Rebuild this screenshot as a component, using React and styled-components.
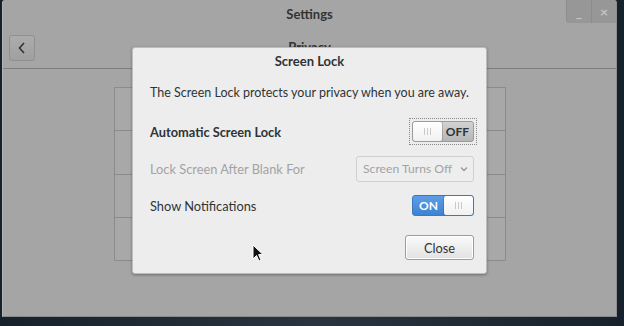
import styled, { createGlobalStyle } from "styled-components";

const GlobalStyle = createGlobalStyle`
  html, body {
    margin: 0;
    padding: 0;
  }
  body {
    background: #1b2530;
    font-family: Lato, "Open Sans", sans-serif;
    font-size: 13px;
    color: #2e3436;
  }
`;

const rows = [
  { label: "Automatic Screen Lock", kind: "switch", on: false, strong: true, focused: true },
  { label: "Lock Screen After Blank For", kind: "combo", value: "Screen Turns Off", disabled: true },
  { label: "Show Notifications", kind: "switch", on: true },
];

const Grip = () => (
  <svg width="9" height="7" viewBox="0 0 9 7">
    <path d="M1.5 0v7M4.5 0v7M7.5 0v7" stroke="#c9c9c9" strokeWidth="1" />
  </svg>
);

const Switch = ({ on, focused }) => (
  <SwitchFocus $focused={focused}>
    <SwitchTrack $on={on}>
      {on && <SwitchLabel $on>ON</SwitchLabel>}
      <SwitchKnob>
        <Grip />
      </SwitchKnob>
      {!on && <SwitchLabel>OFF</SwitchLabel>}
    </SwitchTrack>
  </SwitchFocus>
);

const Cursor = () => (
  <CursorSvg width="12" height="18" viewBox="0 0 12 18">
    <path
      d="M1 1 L1 15 L4.5 11.5 L7 17 L9 16 L6.6 10.6 L11 10.6 Z"
      fill="#111"
      stroke="#fff"
      strokeWidth="1"
      strokeLinejoin="round"
    />
  </CursorSvg>
);

const App = () => {
  return (
    <>
      <GlobalStyle />
      <Desktop>
        <Window>
          <TitleBar>
            <WindowTitle>Settings</WindowTitle>
            <WindowControls>
              <WindowButton>_</WindowButton>
              <WindowButton>×</WindowButton>
            </WindowControls>
          </TitleBar>
          <Toolbar>
            <BackButton>
              <svg width="10" height="12" viewBox="0 0 10 12">
                <path d="M7 1 L2.5 6 L7 11" fill="none" stroke="#2e3436" strokeWidth="1.6" />
              </svg>
            </BackButton>
            <PageTitle>Privacy</PageTitle>
          </Toolbar>
          <Content>
            <ListBox>
              <ListRow />
              <ListRow />
              <ListRow />
              <ListRow />
            </ListBox>
          </Content>

          <Dialog>
            <DialogHeader>Screen Lock</DialogHeader>
            <DialogBody>
              <Description>
                The Screen Lock protects your privacy when you are away.
              </Description>
              {rows.map((row) => (
                <OptionRow key={row.label}>
                  <OptionLabel $strong={row.strong} $disabled={row.disabled}>
                    {row.label}
                  </OptionLabel>
                  {row.kind === "switch" ? (
                    <Switch on={row.on} focused={row.focused} />
                  ) : (
                    <Combo $disabled={row.disabled}>
                      <span>{row.value}</span>
                      <svg width="8" height="6" viewBox="0 0 8 6">
                        <path d="M1 1.5 L4 4.5 L7 1.5" fill="none" stroke="#9a9a9a" strokeWidth="1.4" />
                      </svg>
                    </Combo>
                  )}
                </OptionRow>
              ))}
              <ActionRow>
                <CloseButton>Close</CloseButton>
              </ActionRow>
            </DialogBody>
          </Dialog>
          <Cursor />
        </Window>
      </Desktop>
    </>
  );
};

export default App;

const Desktop = styled.div`
  width: 624px;
  height: 326px;
  padding: 0 7px 9px 2px;
  box-sizing: border-box;
  background: linear-gradient(90deg, #17212b 0%, #2a3440 50%, #17212b 100%);
  display: flex;
`;

const Window = styled.div`
  position: relative;
  flex: 1;
  display: flex;
  flex-direction: column;
  background: #a5a5a5;
  border-left: 1px solid #b4b4b4;
  border-right: 1px solid #8e8e8e;
  border-bottom: 1px solid #8a8a8a;
  border-radius: 3px 3px 0 0;
  overflow: hidden;
`;

const TitleBar = styled.div`
  height: 27px;
  display: flex;
  align-items: center;
  justify-content: center;
  position: relative;
`;

const WindowTitle = styled.span`
  font-weight: bold;
  font-size: 13px;
  color: #333;
`;

const WindowControls = styled.div`
  position: absolute;
  top: 0;
  right: 0;
  display: flex;
  height: 23px;
  background: #979797;
  border-bottom-left-radius: 4px;
  border-left: 1px solid #8c8c8c;
`;

const WindowButton = styled.div`
  width: 24px;
  display: flex;
  align-items: center;
  justify-content: center;
  color: #c4c4c4;
  font-size: 14px;
  font-weight: bold;
  & + & {
    border-left: 1px solid #8c8c8c;
  }
`;

const Toolbar = styled.div`
  height: 41px;
  display: flex;
  align-items: center;
  padding-left: 6px;
  border-bottom: 1px solid #7d7d7d;
  position: relative;
`;

const BackButton = styled.div`
  width: 26px;
  height: 26px;
  box-sizing: border-box;
  border: 1px solid #8f8f8f;
  border-radius: 3px;
  background: linear-gradient(#acacac, #a0a0a0);
  display: flex;
  align-items: center;
  justify-content: center;
`;

const PageTitle = styled.span`
  position: absolute;
  left: 0;
  right: 0;
  top: 12px;
  text-align: center;
  font-weight: bold;
  color: #333;
`;

const Content = styled.div`
  flex: 1;
  display: flex;
  justify-content: center;
  padding-top: 18px;
`;

const ListBox = styled.div`
  width: 392px;
  height: 174px;
  box-sizing: border-box;
  border: 1px solid #8b8b8b;
  display: flex;
  flex-direction: column;
  background: #a8a8a8;
`;

const ListRow = styled.div`
  flex: 1;
  & + & {
    border-top: 1px solid #8b8b8b;
  }
`;

const Dialog = styled.div`
  position: absolute;
  left: 129px;
  top: 47px;
  width: 355px;
  height: 227px;
  box-sizing: border-box;
  background: #ededed;
  border: 1px solid #bdbdbd;
  border-radius: 3px;
  box-shadow: 0 1px 3px rgba(0, 0, 0, 0.35);
  display: flex;
  flex-direction: column;
`;

const DialogHeader = styled.div`
  height: 25px;
  display: flex;
  align-items: center;
  justify-content: center;
  font-weight: bold;
  color: #2e3436;
`;

const DialogBody = styled.div`
  display: flex;
  flex-direction: column;
  padding: 11px 12px 0 17px;
  font-size: 12.8px;
`;

const Description = styled.div`
  height: 18px;
  line-height: 18px;
  margin-bottom: 11px;
  white-space: nowrap;
  font-size: 12.5px;
`;

const OptionRow = styled.div`
  height: 37px;
  display: flex;
  align-items: center;
  justify-content: space-between;
`;

const OptionLabel = styled.span`
  font-weight: ${(p) => (p.$strong ? "bold" : "normal")};
  color: ${(p) => (p.$disabled ? "#a3a3a3" : "#2e3436")};
  white-space: nowrap;
`;

const SwitchFocus = styled.div`
  padding: 2px;
  margin-right: -3px;
  border: 1px dotted ${(p) => (p.$focused ? "#8a8a8a" : "transparent")};
`;

const SwitchTrack = styled.div`
  width: 62px;
  height: 21px;
  box-sizing: border-box;
  border-radius: 3px;
  border: 1px solid ${(p) => (p.$on ? "#3a78c0" : "#9a9a9a")};
  background: ${(p) =>
    p.$on
      ? "linear-gradient(#5e9ee6, #3d82d4)"
      : "linear-gradient(#d2d2d2, #b6b6b6)"};
  display: flex;
  align-items: stretch;
  overflow: hidden;
`;

const SwitchKnob = styled.div`
  width: 29px;
  box-sizing: border-box;
  background: linear-gradient(#ffffff, #f1f1f1);
  border-radius: 2px;
  box-shadow: 0 0 0 1px rgba(0, 0, 0, 0.15);
  display: flex;
  align-items: center;
  justify-content: center;
`;

const SwitchLabel = styled.span`
  flex: 1;
  display: flex;
  align-items: center;
  justify-content: center;
  font-weight: bold;
  font-size: 12px;
  color: ${(p) => (p.$on ? "#ffffff" : "#2e3436")};
`;

const Combo = styled.div`
  width: 118px;
  height: 26px;
  box-sizing: border-box;
  border: 1px solid #d0d0d0;
  border-radius: 3px;
  background: #eeeeee;
  display: flex;
  align-items: center;
  justify-content: space-between;
  padding: 0 5px 0 6px;
  font-size: 12.2px;
  white-space: nowrap;
  color: ${(p) => (p.$disabled ? "#a3a3a3" : "#2e3436")};
`;

const ActionRow = styled.div`
  display: flex;
  justify-content: flex-end;
  margin-top: 11px;
`;

const CloseButton = styled.div`
  width: 69px;
  height: 25px;
  box-sizing: border-box;
  border: 1px solid #8ba0b4;
  border-radius: 3px;
  background: linear-gradient(#fafafa, #e2e2e2);
  box-shadow: inset 0 0 0 1px #ffffff;
  display: flex;
  align-items: center;
  justify-content: center;
  color: #2e3436;
`;

const CursorSvg = styled.svg`
  position: absolute;
  left: 249px;
  top: 244px;
`;
